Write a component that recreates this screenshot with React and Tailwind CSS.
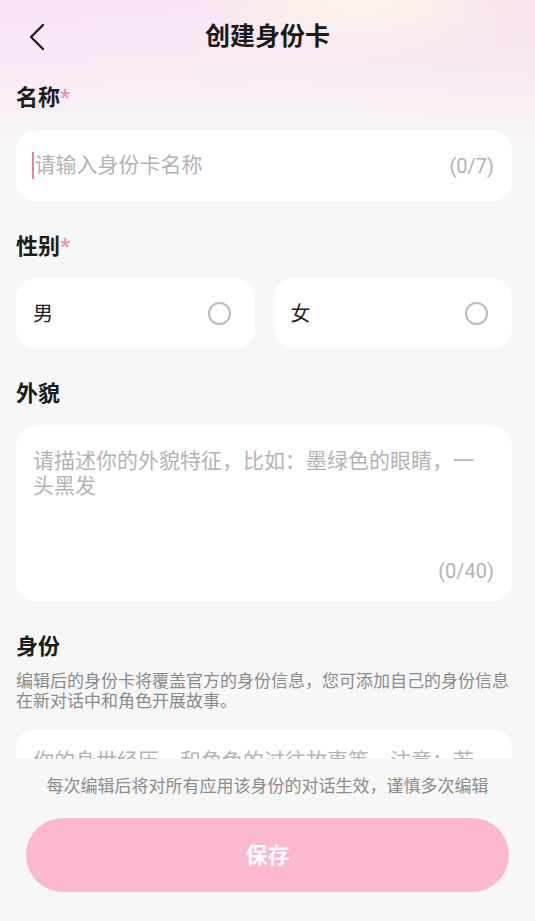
import React from "react";

function Label({ children, required }) {
  return (
    <div className="h-[30px] leading-[30px] text-[22px] font-bold text-[#1c1c1c]">
      {children}
      {required && <span className="text-[#f58fb4]">*</span>}
    </div>
  );
}

function GenderCard({ label }) {
  return (
    <div className="h-[71px] rounded-[20px] bg-white flex items-center justify-between pl-[17px] pr-[24px]">
      <span className="text-[20px] text-[#222222] leading-none">{label}</span>
      <span className="w-[23px] h-[23px] rounded-full border-2 border-[#bdbdbd] box-border" />
    </div>
  );
}

export default function App() {
  return (
    <div className="h-[921px] w-full flex flex-col overflow-hidden bg-[#f7f7f7] font-['Roboto','Noto_Sans_CJK_SC',sans-serif]">
      <div className="flex-1 min-h-0 overflow-hidden bg-no-repeat bg-[length:100%_150px] bg-[image:linear-gradient(180deg,rgba(247,247,247,0)_0%,rgba(247,247,247,0.35)_45%,#f7f7f7_100%),radial-gradient(ellipse_170px_60px_at_68%_0%,#fdf5e6_0%,rgba(253,245,230,0)_100%),linear-gradient(90deg,#fae2f6_0%,#f9e5f3_55%,#f8e1ef_100%)]">
        <div className="h-[74px] grid grid-cols-[80px_1fr_80px] items-center">
          <div className="pl-[29px] flex items-center">
            <svg width="17" height="28" viewBox="0 0 17 28" fill="none">
              <polyline points="14,2 2,14 14,26" stroke="#1f1f1f" strokeWidth="2.4" strokeLinecap="round" strokeLinejoin="round" />
            </svg>
          </div>
          <div className="text-center text-[25px] font-bold text-[#1a1a1a]">创建身份卡</div>
          <div />
        </div>

        <div className="pl-4 pr-[23px]">
          <div className="mt-[9px]">
            <Label required>名称</Label>
          </div>
          <div className="mt-[17px] h-[71px] rounded-[20px] bg-white flex items-center pl-[16px] pr-[18px]">
            <span className="w-[1.5px] h-[27px] bg-[#f27ba5]" />
            <span className="ml-[1px] flex-1 text-[21px] text-[#b4b4b4]">请输入身份卡名称</span>
            <span className="text-[20px] text-[#b4b4b4]">(0/7)</span>
          </div>

          <div className="mt-[31px]">
            <Label required>性别</Label>
          </div>
          <div className="mt-[16px] grid grid-cols-2 gap-[19px]">
            <GenderCard label="男" />
            <GenderCard label="女" />
          </div>

          <div className="mt-[30px]">
            <Label>外貌</Label>
          </div>
          <div className="mt-[17px] h-[175px] rounded-[20px] bg-white flex flex-col justify-between pt-[23px] pb-[17px] pl-[17px] pr-[18px]">
            <p className="pr-[2px] text-[21px] leading-[25px] text-[#b4b4b4]">请描述你的外貌特征，比如：墨绿色的眼睛，一头黑发</p>
            <div className="text-right text-[20px] leading-[25px] text-[#b4b4b4]">(0/40)</div>
          </div>

          <div className="mt-[31px]">
            <Label>身份</Label>
          </div>
          <p className="mt-[9px] text-[17px] leading-[20px] text-[#8a8a8a]">
            编辑后的身份卡将覆盖官方的身份信息，您可添加自己的身份信息在新对话中和角色开展故事。
          </p>
          <div className="mt-[18px] h-[200px] rounded-[20px] bg-white pt-[20px] pl-[17px] pr-[20px]">
            <p className="text-[21px] leading-[25px] text-[#b4b4b4]">你的身世经历，和角色的过往故事等，注意：若</p>
          </div>
        </div>
      </div>

      <div className="h-[162px] shrink-0 bg-[#f7f7f7] flex flex-col items-center px-[26px] pt-[15px]">
        <div className="text-[17px] leading-[24px] text-[#8c8c8c]">每次编辑后将对所有应用该身份的对话生效，谨慎多次编辑</div>
        <button className="mt-[20px] w-full h-[74px] rounded-full bg-[#fcb8d0] text-white text-[22px] font-bold">保存</button>
      </div>
    </div>
  );
}
